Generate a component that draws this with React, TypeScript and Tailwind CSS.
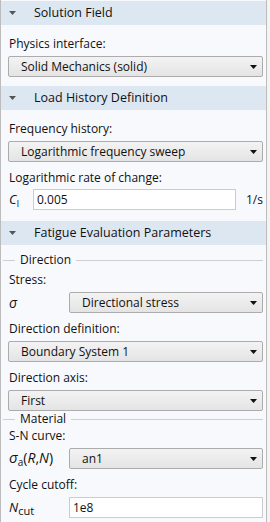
import type { ReactNode } from 'react'

const FONT = { fontFamily: '"Open Sans", "Noto Sans", sans-serif' }

function Arrow() {
  return (
    <svg width="7" height="4" viewBox="0 0 7 4" className="shrink-0">
      <path d="M0 0H7L3.5 4Z" fill="#111" />
    </svg>
  )
}

function Header({ title }: { title: string }) {
  return (
    <div className="h-[24px] flex items-center bg-[#dde7f2] pl-[8px]">
      <svg width="7" height="4" viewBox="0 0 7 4">
        <path d="M0 0H7L3.5 4Z" fill="#555" />
      </svg>
      <span className="ml-[18px] text-[12.5px] text-[#111]">{title}</span>
    </div>
  )
}

function Label({ children, className = '' }: { children: ReactNode; className?: string }) {
  return <div className={'h-[18px] leading-[18px] pl-[8px] ' + className}>{children}</div>
}

function Select({ value, className = '' }: { value: string; className?: string }) {
  return (
    <div className={'h-[21px] flex items-center pl-[12px] pr-[5px] border border-[#acacac] rounded-[2px] bg-gradient-to-b from-[#f3f3f3] to-[#e4e4e4] ' + className}>
      <span className="flex-1">{value}</span>
      <Arrow />
    </div>
  )
}

function Input({ value, className = '' }: { value: string; className?: string }) {
  return (
    <div className={'h-[21px] flex items-center pl-[3px] border border-[#cccccc] bg-white ' + className}>
      {value}
    </div>
  )
}

function Divider({ title, className = '' }: { title: string; className?: string }) {
  return (
    <div className={'h-[16px] flex items-center ml-[2px] ' + className}>
      <div className="w-[12px] h-px bg-[#cfcfcf]" />
      <span className="px-[5px] leading-[16px]">{title}</span>
      <div className="flex-1 h-px bg-[#cfcfcf]" />
    </div>
  )
}

function Sub({ children, className = '' }: { children: ReactNode; className?: string }) {
  return <span className={'relative top-[3px] not-italic ' + className}>{children}</span>
}

export default function App() {
  return (
    <div className="w-[270px] h-[522px] bg-[#f4f4f4] overflow-hidden text-[12px] text-[#111]" style={FONT}>
      <div className="w-[267px] h-full border-l border-r border-[#bcbcbc] bg-[#f8f9fd] pt-px">
        <Header title="Solution Field" />
        <div className="pt-[10px] pb-[9px] pr-[3px]">
          <Label>Physics interface:</Label>
          <Select value="Solid Mechanics (solid)" className="mt-[3px] ml-[7px]" />
        </div>

        <Header title="Load History Definition" />
        <div className="pt-[10px] pb-[11px] pr-[3px]">
          <Label>Frequency history:</Label>
          <Select value="Logarithmic frequency sweep" className="mt-[3px] ml-[7px]" />
          <Label className="mt-[7px]">Logarithmic rate of change:</Label>
          <div className="mt-[2px] h-[21px] flex items-center pl-[8px]">
            <span className="w-[24px] italic text-[13px] leading-[21px]">
              C<Sub className="text-[9px]">l</Sub>
            </span>
            <Input value="0.005" className="w-[203px]" />
            <span className="ml-[10px]">1/s</span>
          </div>
        </div>

        <Header title="Fatigue Evaluation Parameters" />
        <div className="pt-[7px] pr-[3px]">
          <Divider title="Direction" />
          <Label className="mt-[3px]">Stress:</Label>
          <div className="mt-[3px] h-[21px] flex items-center pl-[8px]">
            <span className="w-[60px] italic text-[14px] leading-[21px]">σ</span>
            <Select value="Directional stress" className="flex-1" />
          </div>
          <Label className="mt-[7px]">Direction definition:</Label>
          <Select value="Boundary System 1" className="mt-[3px] ml-[7px]" />
          <Label className="mt-[7px]">Direction axis:</Label>
          <Select value="First" className="mt-[3px] ml-[7px]" />
          <Divider title="Material" />
          <Label>S-N curve:</Label>
          <div className="mt-[3px] h-[21px] flex items-center pl-[8px]">
            <span className="w-[60px] text-[14px] leading-[21px] whitespace-nowrap">
              <i className="text-[15px]">σ</i>
              <Sub className="text-[10px]">a</Sub>(<i>R</i>,<i>N</i>)
            </span>
            <Select value="an1" className="flex-1" />
          </div>
          <Label className="mt-[7px]">Cycle cutoff:</Label>
          <div className="mt-[3px] h-[21px] flex items-center pl-[8px]">
            <span className="w-[60px] text-[13px] leading-[21px]">
              <i>N</i>
              <Sub className="text-[11px]">cut</Sub>
            </span>
            <Input value="1e8" className="flex-1" />
          </div>
        </div>
      </div>
    </div>
  )
}
